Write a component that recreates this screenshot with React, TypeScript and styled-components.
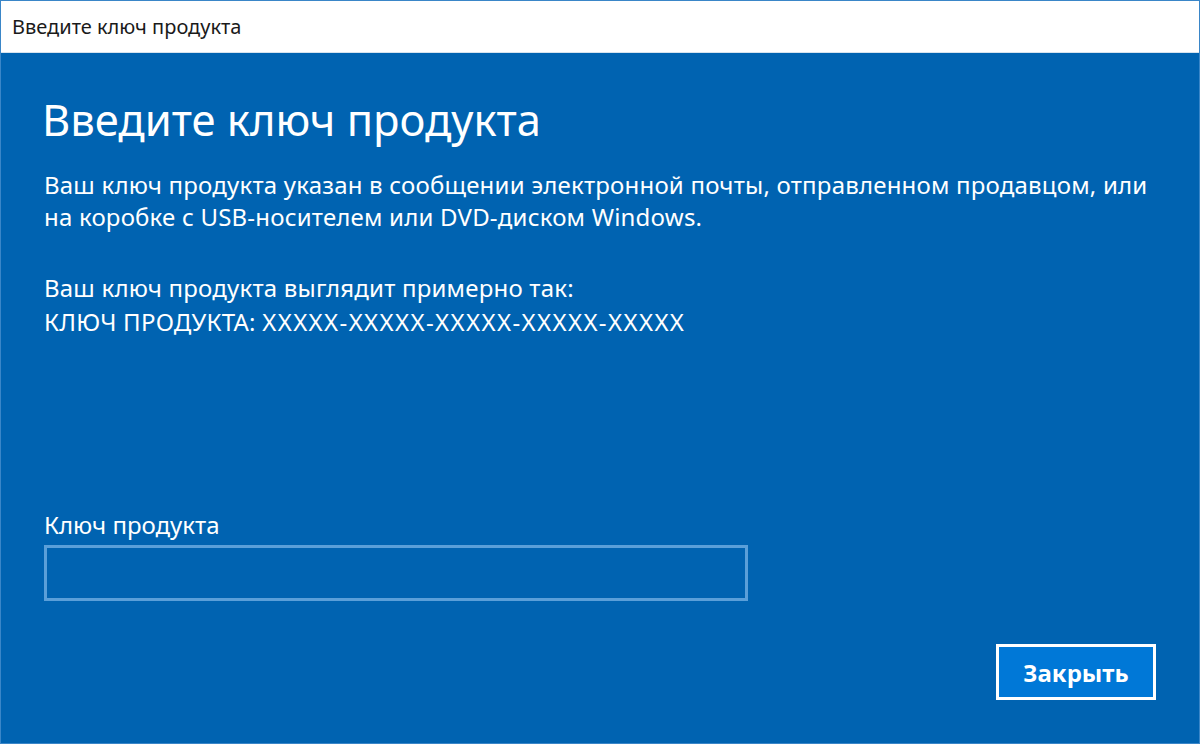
import React from "react";
import styled, { createGlobalStyle } from "styled-components";

const GlobalStyle = createGlobalStyle`
  html, body {
    margin: 0;
    padding: 0;
    width: 1200px;
    height: 744px;
    overflow: hidden;
  }
  body {
    font-family: "Noto Sans", "Open Sans", sans-serif;
  }
`;

const Window = styled.div`
  width: 1200px;
  height: 744px;
  box-sizing: border-box;
  display: flex;
  flex-direction: column;
  background: #0063b1;
  border: 1px solid #3a86c8;
`;

const TitleBar = styled.div`
  height: 51px;
  flex-shrink: 0;
  display: flex;
  align-items: center;
  padding-left: 11px;
  background: #ffffff;
  border-bottom: 1px solid #d7e3ee;
  color: #1a1a1a;
  font-size: 20px;
`;

const Body = styled.div`
  flex: 1;
  display: flex;
  flex-direction: column;
  padding: 36px 43px 43px 43px;
  color: #ffffff;
`;

const Heading = styled.h1`
  margin: 0 0 20px -2px;
  font-size: 43.5px;
  font-weight: 400;
  line-height: 60px;
`;

const Text = styled.p<{ $gap?: number; $lh: number }>`
  margin: 0 0 ${(p) => p.$gap ?? 0}px 0;
  font-size: 24px;
  letter-spacing: 0.2px;
  line-height: ${(p) => p.$lh}px;
  white-space: nowrap;
`;

const KeySample = styled.span`
  letter-spacing: 1.4px;
`;

const Field = styled.div`
  margin-top: auto;
  display: flex;
  flex-direction: column;
  gap: 5px;
`;

const Label = styled.label`
  font-size: 24px;
  line-height: 30px;
`;

const Input = styled.input`
  width: 704px;
  height: 56px;
  box-sizing: border-box;
  background: transparent;
  border: 3px solid #5a9fd9;
  outline: none;
  color: #fff;
  font-size: 22px;
  padding: 0 10px;
`;

const Footer = styled.div`
  display: flex;
  justify-content: flex-end;
  margin-top: 43px;
`;

const Button = styled.button`
  width: 160px;
  height: 56px;
  box-sizing: border-box;
  background: #0078d7;
  border: 3px solid #ffffff;
  color: #ffffff;
  font-family: "Noto Sans", "Open Sans", sans-serif;
  font-size: 24px;
  font-weight: 700;
  cursor: pointer;
`;

function App() {
  return (
    <>
      <GlobalStyle />
      <Window>
        <TitleBar>Введите ключ продукта</TitleBar>
        <Body>
          <Heading>Введите ключ продукта</Heading>
          <Text $lh={32} $gap={38}>
            Ваш ключ продукта указан в сообщении электронной почты,
            отправленном продавцом, или
            <br />
            на коробке с USB-носителем или DVD-диском Windows.
          </Text>
          <Text $lh={34}>
            Ваш ключ продукта выглядит примерно так:
            <br />
            КЛЮЧ ПРОДУКТА:{" "}
            <KeySample>XXXXX-XXXXX-XXXXX-XXXXX-XXXXX</KeySample>
          </Text>
          <Field>
            <Label>Ключ продукта</Label>
            <Input />
          </Field>
          <Footer>
            <Button>Закрыть</Button>
          </Footer>
        </Body>
      </Window>
    </>
  );
}

export default App;
